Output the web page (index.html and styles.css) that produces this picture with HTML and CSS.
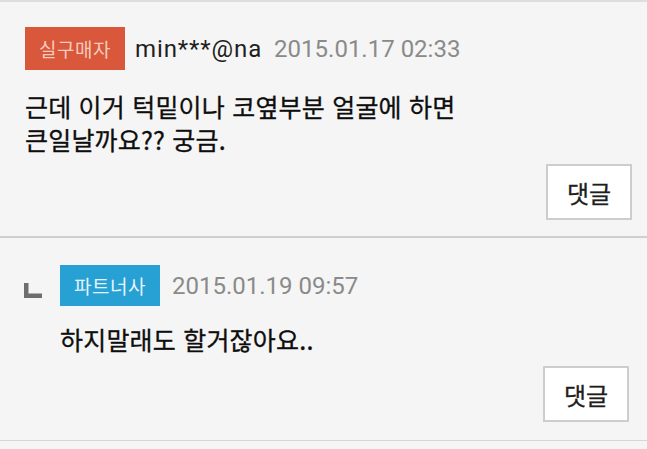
FILE: index.html
```html
<!DOCTYPE html>
<html lang="ko">
<head>
<meta charset="utf-8">
<link rel="stylesheet" href="styles.css">
</head>
<body>
<div class="list">
  <div class="comment">
    <div class="head">
      <span class="badge badge-buyer">실구매자</span>
      <span class="user">min***@na</span>
      <span class="date">2015.01.17 02:33</span>
    </div>
    <p class="text">근데 이거 턱밑이나 코옆부분 얼굴에 하면<br>큰일날까요?? 궁금.</p>
    <div class="actions"><button class="reply-btn">댓글</button></div>
  </div>
  <div class="comment reply">
    <div class="head">
      <svg class="reply-mark" width="18" height="15" viewBox="0 0 18 15"><path d="M0 0h4.5v10.5H18V15H0z" fill="#6e6e6e"/></svg>
      <span class="badge badge-partner">파트너사</span>
      <span class="date">2015.01.19 09:57</span>
    </div>
    <p class="text">하지말래도 할거잖아요..</p>
    <div class="actions"><button class="reply-btn">댓글</button></div>
  </div>
</div>
</body>
</html>
```
FILE: styles.css
```css
html, body {
  margin: 0;
  padding: 0;
  background: #f5f5f5;
}
body {
  font-family: "Roboto", "Noto Sans CJK KR", sans-serif;
  color: #1f1f1f;
  width: 647px;
  height: 449px;
  overflow: hidden;
}
.list {
  border-top: 2px solid #dedede;
}
.comment {
  padding: 25px 15px 16px 25px;
  border-bottom: 2px solid #cfcfcf;
  display: flex;
  flex-direction: column;
}
.comment.reply {
  padding: 27px 18px 18px 24px;
  border-bottom: 1px solid #d6d6d6;
}
.head {
  display: flex;
  align-items: center;
  height: 43px;
}
.reply .head {
  height: 41px;
}
.badge {
  display: flex;
  align-items: center;
  justify-content: center;
  width: 100px;
  height: 100%;
  font-family: "Noto Sans CJK KR", sans-serif;
  font-size: 19px;
  letter-spacing: 0.5px;
  box-sizing: border-box;
}
.badge-buyer {
  background: #d9573b;
  color: #f6cbbd;
}
.badge-partner {
  background: #27a0d3;
  color: #e6f4fb;
}
.user {
  margin-left: 10px;
  font-size: 24px;
  letter-spacing: 0.9px;
  color: #1e1e1e;
}
.date {
  margin-left: 12px;
  font-size: 24px;
  color: #8a8a8a;
}
.reply .date {
  margin-left: 12px;
}
.reply-mark {
  margin: 10px 18px 0 0;
}
.text {
  margin: 20px 0 0 0;
  font-family: "Noto Sans CJK KR", sans-serif;
  font-size: 25px;
  letter-spacing: 0.2px;
  line-height: 33px;
  color: #0e0e0e;
  -webkit-text-stroke: 0.3px #0e0e0e;
}
.reply .text {
  margin: 17px 0 0 36px;
}
.actions {
  display: flex;
  justify-content: flex-end;
  margin-top: 8px;
}
.reply .actions {
  margin-top: 10px;
}
.reply-btn {
  width: 86px;
  height: 56px;
  background: #ffffff;
  border: 2px solid #cdcdcd;
  font-family: "Noto Sans CJK KR", sans-serif;
  font-size: 24px;
  color: #1e1e1e;
  -webkit-text-stroke: 0.3px #1e1e1e;
  padding: 0;
}
```
